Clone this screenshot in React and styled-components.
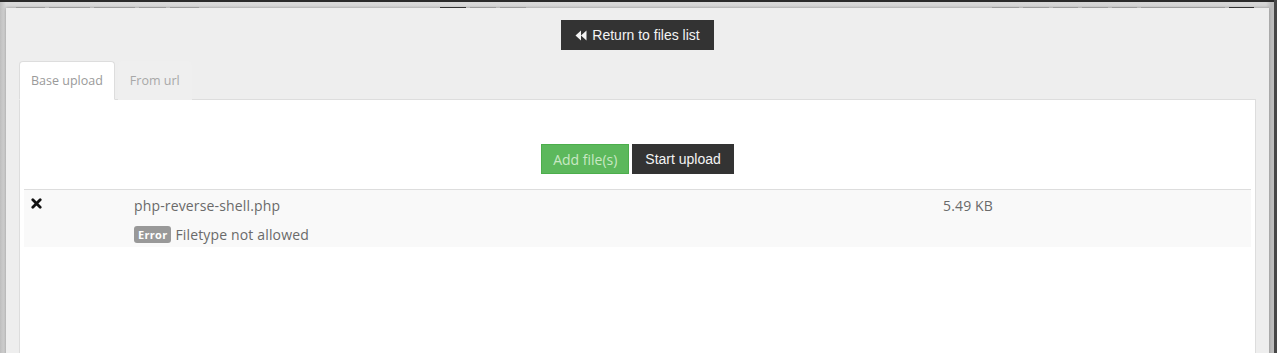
import React from 'react';
import styled, { createGlobalStyle } from 'styled-components';

const GlobalStyle = createGlobalStyle`
  html, body {
    margin: 0;
    padding: 0;
    overflow: hidden;
  }
  body {
    font-family: "Open Sans", "DejaVu Sans", sans-serif;
    background: #cdcdcd;
  }
`;

const Page = styled.div`
  height: 100vh;
  overflow: hidden;
  display: flex;
  flex-direction: column;
  background: linear-gradient(to right, #bdbdbd 0, #dadada 6px, #d6d6d6 calc(100% - 8px), #bdbdbd calc(100% - 3px));
  border-right: 3px solid #474747;
  box-sizing: border-box;
`;

const TopBar = styled.div`
  flex: none;
  height: 2px;
  background: #2a2a2a;
`;

const Toolbar = styled.div`
  flex: none;
  height: 6px;
  display: flex;
  align-items: flex-end;
  padding-left: 16px;
`;

const ToolbarLine = styled.span`
  width: ${props => props.w}px;
  margin-left: ${props => props.gap || 4}px;
  height: 1px;
  background: ${props => props.dark ? '#3a3a3a' : '#b4b4b4'};
  &:first-child { margin-left: 0; }
`;

const Modal = styled.div`
  flex: 1 0 380px;
  margin-left: 6px;
  width: 1263px;
  background: #eeeeee;
  box-shadow: 0 0 3px rgba(0, 0, 0, 0.35);
  padding: 12px 13px 0;
  box-sizing: border-box;
  display: flex;
  flex-direction: column;
`;

const TopActions = styled.div`
  display: flex;
  justify-content: center;
`;

const DarkButton = styled.button`
  height: 30px;
  padding: 0 14px;
  border: 0;
  border-radius: 0;
  background: #333333;
  color: #f4f4f4;
  font-family: "Liberation Sans", Arial, sans-serif;
  font-size: 14px;
  display: flex;
  align-items: center;
  gap: 5px;
  cursor: pointer;
`;

const Tabs = styled.div`
  margin-top: 11px;
  display: flex;
  border-bottom: 1px solid #dddddd;
`;

const Tab = styled.div`
  height: 37px;
  line-height: 37px;
  padding: 0 11px;
  margin-left: ${props => props.active ? 0 : 3}px;
  margin-bottom: -1px;
  font-size: 12.5px;
  color: ${props => props.active ? '#9a9a9a' : '#a8a8a8'};
  background: ${props => props.active ? '#ffffff' : '#efefef'};
  border: 1px solid ${props => props.active ? '#dddddd' : 'transparent'};
  border-bottom-color: ${props => props.active ? '#ffffff' : 'transparent'};
  border-radius: 4px 4px 0 0;
`;

const TabPanel = styled.div`
  flex: 1;
  background: #ffffff;
  border: 1px solid #dddddd;
  border-top: 0;
  padding: 0 4px;
`;

const UploadActions = styled.div`
  display: flex;
  justify-content: center;
  gap: 3px;
  padding: 44px 0 15px;
`;

const AddButton = styled.button`
  height: 30px;
  padding: 0 11px;
  border: 1px solid #4cae4c;
  background: #5cb85c;
  color: #c9e8c4;
  font-family: "Open Sans", sans-serif;
  font-size: 14px;
`;

const StartButton = styled(DarkButton)`
  padding: 0 13px;
`;

const FileTable = styled.table`
  width: 100%;
  border-collapse: collapse;
  table-layout: fixed;
`;

const Row = styled.tr`
  background: #f9f9f9;
  border-top: 1px solid #dddddd;
`;

const Cell = styled.td`
  padding: 6px 8px 4px;
  vertical-align: top;
  font-size: 14px;
  line-height: 20px;
  color: #6a6a6a;
  letter-spacing: 0.15px;
`;

const FileName = styled.div``;

const ErrorLine = styled.div`
  margin-top: 10px;
  display: flex;
  align-items: center;
  gap: 4px;
  height: 17px;
`;

const Label = styled.span`
  background: #999999;
  color: #ffffff;
  font-size: 11px;
  font-weight: 700;
  line-height: 17px;
  padding: 0 4px;
  border-radius: 3px;
  letter-spacing: 0.3px;
`;

const RemoveIcon = () => (
  <svg width="11" height="11" viewBox="0 0 11 11" style={{ display: 'block', marginTop: 2, marginLeft: -1 }}>
    <path d="M1.8 1.8 L9.2 9.2 M9.2 1.8 L1.8 9.2" stroke="#111" strokeWidth="2.8" strokeLinecap="round" />
  </svg>
);

const BackIcon = () => (
  <svg width="12" height="11" viewBox="0 0 12 11">
    <path d="M6 0.5 L0.5 5.5 L6 10.5 Z M11.5 0.5 L6 5.5 L11.5 10.5 Z" fill="#f4f4f4" />
  </svg>
);

const toolbarLeft = [29, 41, 41, 27, 29];
const toolbarMid = [26, 26, 26];
const toolbarRight = [27, 26, 25, 26, 25, 84, 25];

export default function App() {
  return (
    <>
      <GlobalStyle />
      <Page>
        <TopBar />
        <Toolbar>
          {toolbarLeft.map((w, i) => <ToolbarLine key={'l' + i} w={w} />)}
          {toolbarMid.map((w, i) => (
            <ToolbarLine key={'m' + i} w={w} dark={i === 0} gap={i === 0 ? 241 : 4} />
          ))}
          {toolbarRight.map((w, i) => (
            <ToolbarLine key={'r' + i} w={w} dark={i === toolbarRight.length - 1} gap={i === 0 ? 466 : 4} />
          ))}
        </Toolbar>
        <Modal>
          <TopActions>
            <DarkButton>
              <BackIcon />
              Return to files list
            </DarkButton>
          </TopActions>
          <Tabs>
            <Tab active>Base upload</Tab>
            <Tab>From url</Tab>
          </Tabs>
          <TabPanel>
            <UploadActions>
              <AddButton>Add file(s)</AddButton>
              <StartButton>Start upload</StartButton>
            </UploadActions>
            <FileTable>
              <colgroup>
                <col style={{ width: 102 }} />
                <col style={{ width: 809 }} />
                <col />
              </colgroup>
              <tbody>
                <Row>
                  <Cell><RemoveIcon /></Cell>
                  <Cell>
                    <FileName>php-reverse-shell.php</FileName>
                    <ErrorLine>
                      <Label>Error</Label>
                      Filetype not allowed
                    </ErrorLine>
                  </Cell>
                  <Cell>5.49 KB</Cell>
                </Row>
              </tbody>
            </FileTable>
          </TabPanel>
        </Modal>
      </Page>
    </>
  );
}
